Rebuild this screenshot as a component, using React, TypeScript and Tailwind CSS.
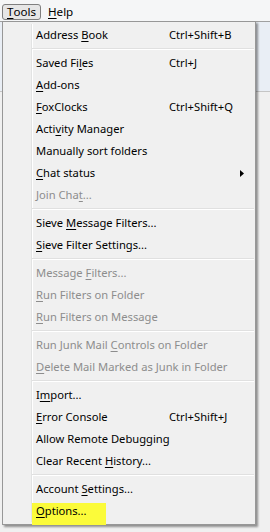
// Thunderbird-style "Tools" dropdown menu — Windows 7 classic look
type Item =
  | { kind: "sep" }
  | {
      kind: "item";
      label: string;
      // index of the access-key letter to underline (-1 = none)
      key: number;
      shortcut?: string;
      disabled?: boolean;
      submenu?: boolean;
      marked?: boolean;
    };

const ITEMS: Item[] = [
  { kind: "item", label: "Address Book", key: 8, shortcut: "Ctrl+Shift+B" },
  { kind: "sep" },
  { kind: "item", label: "Saved Files", key: 8, shortcut: "Ctrl+J" },
  { kind: "item", label: "Add-ons", key: 0 },
  { kind: "item", label: "FoxClocks", key: 0, shortcut: "Ctrl+Shift+Q" },
  { kind: "item", label: "Activity Manager", key: 4 },
  { kind: "item", label: "Manually sort folders", key: -1 },
  { kind: "item", label: "Chat status", key: 0, submenu: true },
  { kind: "item", label: "Join Chat...", key: 8, disabled: true },
  { kind: "sep" },
  { kind: "item", label: "Sieve Message Filters...", key: 6 },
  { kind: "item", label: "Sieve Filter Settings...", key: 0 },
  { kind: "sep" },
  { kind: "item", label: "Message Filters...", key: 8, disabled: true },
  { kind: "item", label: "Run Filters on Folder", key: 0, disabled: true },
  { kind: "item", label: "Run Filters on Message", key: 0, disabled: true },
  { kind: "sep" },
  { kind: "item", label: "Run Junk Mail Controls on Folder", key: 14, disabled: true },
  { kind: "item", label: "Delete Mail Marked as Junk in Folder", key: 0, disabled: true },
  { kind: "sep" },
  { kind: "item", label: "Import...", key: 1 },
  { kind: "item", label: "Error Console", key: 0, shortcut: "Ctrl+Shift+J" },
  { kind: "item", label: "Allow Remote Debugging", key: -1 },
  { kind: "item", label: "Clear Recent History...", key: 13 },
  { kind: "sep" },
  { kind: "item", label: "Account Settings...", key: 8 },
  { kind: "item", label: "Options...", key: 0, marked: true },
];

function AccessLabel({ text, index }: { text: string; index: number }) {
  if (index < 0) return <>{text}</>;
  return (
    <>
      {text.slice(0, index)}
      <span className="underline underline-offset-[2px]">{text[index]}</span>
      {text.slice(index + 1)}
    </>
  );
}

function SubmenuArrow() {
  return (
    <svg width="4" height="7" viewBox="0 0 4 7" aria-hidden="true">
      <path d="M0 0L4 3.5L0 7Z" fill="#000" />
    </svg>
  );
}

export default function App() {
  return (
    <div
      className="relative h-[532px] w-[270px] overflow-hidden bg-[#f0f0f0] text-[11.2px] text-black"
      style={{ fontFamily: '"Noto Sans", "Open Sans", Arial, sans-serif' }}
    >
      {/* menu bar */}
      <div className="flex h-[21px] items-start bg-[#f5f6f7] pl-[2px] pt-[4px] text-[11.6px]">
        <div className="flex h-[16px] w-[39px] items-center justify-center rounded-[3px] border border-[#7f7f7f] bg-[#e6e6e6] leading-none">
          <AccessLabel text="Tools" index={0} />
        </div>
        <div className="flex h-[16px] items-center pl-[7px] leading-none">
          <AccessLabel text="Help" index={0} />
        </div>
      </div>

      {/* window content behind the menu */}
      <div className="flex h-[511px] flex-col border-t border-[#a0a0a0]">
        <div className="h-[70px] border-b border-[#c5c5c5] bg-[#e9eef5]" />
        <div className="flex-1 bg-[#f0f0f0]" />
      </div>

      {/* dropdown */}
      <div className="absolute left-[2px] top-[21px] w-[254px] border border-[#979797] bg-[#f0f0f0] py-[2px] shadow-[2px_2px_2px_rgba(0,0,0,0.4)]">
        <div className="absolute bottom-[2px] left-[28px] top-[2px] w-px bg-[#e2e3e3]" />
        <div className="absolute bottom-[2px] left-[29px] top-[2px] w-px bg-white" />
        {ITEMS.map((it, i) =>
          it.kind === "sep" ? (
            <div key={i} className="relative h-[6px] pl-[29px] pr-[1px] pt-[2px]">
              <div className="h-px bg-[#e0e0e0]" />
              <div className="h-px bg-white" />
            </div>
          ) : (
            <div
              key={i}
              className={`relative grid h-[22px] grid-cols-[133px_1fr] items-center whitespace-nowrap pl-[33px] ${
                it.disabled ? "text-[#8d8d8d]" : "text-black"
              }`}
            >
              {it.marked && <span className="absolute left-[29px] top-[3px] h-[22px] w-[74px] bg-[#fbfb3a]" />}
              <span className="relative">
                <AccessLabel text={it.label} index={it.key} />
              </span>
              <span className="relative flex items-center">
                {it.shortcut}
                {it.submenu && (
                  <span className="ml-[71px] flex items-center">
                    <SubmenuArrow />
                  </span>
                )}
              </span>
            </div>
          ),
        )}
      </div>
    </div>
  );
}
